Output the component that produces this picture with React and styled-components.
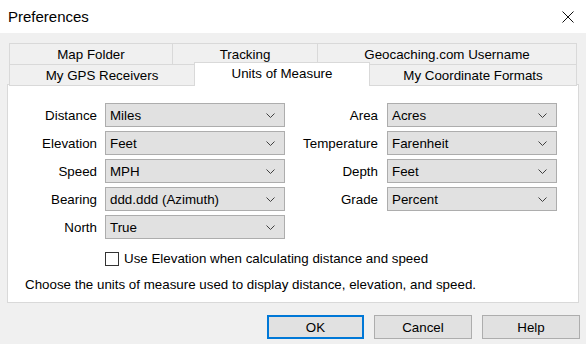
import React from 'react';
import styled, {createGlobalStyle} from 'styled-components';

const Global = createGlobalStyle`
    html, body {
        margin:0;
        padding:0;
        background:#f0f0f0;
    }
    body {
        width:586px;
        height:344px;
        overflow:hidden;
        font-family:"Liberation Sans", Arial, sans-serif;
        font-size:13.35px;
        color:#000;
    }
`;
const Window = styled.div`
    width:586px;
    height:344px;
    background:#f0f0f0;
    display:flex;
    flex-direction:column;
`;
const TitleBar = styled.div`
    height:33px;
    background:#fff;
    display:flex;
    align-items:center;
    justify-content:space-between;
    padding:0 12px 0 8px;
    box-sizing:border-box;
`;
const Title = styled.div`
    font-size:15px;
`;
const Tabs = styled.div`
    margin:10px 0 0 9px;
    width:568px;
    display:flex;
    flex-direction:column;
`;
const TabRow = styled.div`
    display:flex;
    height:21px;
`;
const Tab = styled.div`
    width:${p => p.w}px;
    box-sizing:border-box;
    height:${p => p.active ? 24 : 22}px;
    margin-top:${p => p.active ? -2 : 0}px;
    margin-right:-1px;
    border:1px solid #d9d9d9;
    border-bottom:${p => p.active ? 'none' : '1px solid #d9d9d9'};
    background:${p => p.active ? '#fff' : '#f0f0f0'};
    z-index:${p => p.active ? 2 : 1};
    display:flex;
    justify-content:center;
    align-items:${p => p.active ? 'flex-start' : 'center'};
    padding-top:${p => p.active ? 3 : 0}px;
    &:last-child { margin-right:0; }
`;
const Panel = styled.div`
    margin:-1px 0 0 7px;
    width:572px;
    height:219px;
    box-sizing:border-box;
    border:1px solid #d9d9d9;
    background:#fff;
    padding-top:18px;
    display:flex;
    flex-direction:column;
`;
const Form = styled.div`
    display:flex;
    gap:8px;
    align-items:flex-start;
`;
const Column = styled.div`
    display:grid;
    grid-template-columns:${p => p.cols};
    column-gap:${p => p.gap}px;
    row-gap:4px;
    grid-auto-rows:24px;
    align-items:center;
`;
const Label = styled.div`
    text-align:right;
`;
const Combo = styled.div`
    height:24px;
    box-sizing:border-box;
    border:1px solid #adadad;
    background:#e1e1e1;
    display:flex;
    align-items:center;
    justify-content:space-between;
    padding:0 9px 0 4px;
`;
const CheckRow = styled.div`
    display:flex;
    align-items:center;
    gap:5px;
    padding-left:97px;
    margin-top:12px;
`;
const Box = styled.div`
    width:14px;
    height:14px;
    box-sizing:border-box;
    border:1px solid #333;
    background:#fff;
`;
const Note = styled.div`
    padding-left:17px;
    margin-top:11px;
`;
const Buttons = styled.div`
    display:flex;
    justify-content:flex-end;
    gap:10px;
    padding:12px 6px 0 0;
`;
const Button = styled.div`
    width:${p => p.w || 98}px;
    height:24px;
    box-sizing:border-box;
    border:${p => p.primary ? '2px solid #0078d7' : '1px solid #adadad'};
    background:#e1e1e1;
    display:flex;
    align-items:center;
    justify-content:center;
`;

function Chevron(){
    return (
        <svg width="9" height="5" viewBox="0 0 9 5">
            <polyline points="0.5,0.5 4.5,4.5 8.5,0.5" fill="none" stroke="#404040" strokeWidth="1"/>
        </svg>
    );
}

const left = [
    ['Distance', 'Miles'],
    ['Elevation', 'Feet'],
    ['Speed', 'MPH'],
    ['Bearing', 'ddd.ddd (Azimuth)'],
    ['North', 'True'],
];
const right = [
    ['Area', 'Acres'],
    ['Temperature', 'Farenheit'],
    ['Depth', 'Feet'],
    ['Grade', 'Percent'],
];

function App(){
    return (
        <Window>
            <Global/>
            <TitleBar>
                <Title>Preferences</Title>
                <svg width="12" height="12" viewBox="0 0 12 12">
                    <path d="M0.5 0.5 L11.5 11.5 M11.5 0.5 L0.5 11.5" stroke="#111" strokeWidth="1"/>
                </svg>
            </TitleBar>
            <Tabs>
                <TabRow>
                    <Tab w={164}>Map Folder</Tab>
                    <Tab w={146}>Tracking</Tab>
                    <Tab w={260}>Geocaching.com Username</Tab>
                </TabRow>
                <TabRow>
                    <Tab w={186}>My GPS Receivers</Tab>
                    <Tab w={176} active>Units of Measure</Tab>
                    <Tab w={208}>My Coordinate Formats</Tab>
                </TabRow>
            </Tabs>
            <Panel>
                <Form>
                    <Column cols="89px 180px" gap={8}>
                        {left.map(([l, v]) => (
                            <React.Fragment key={l}>
                                <Label>{l}</Label>
                                <Combo>{v}<Chevron/></Combo>
                            </React.Fragment>
                        ))}
                    </Column>
                    <Column cols="85px 170px" gap={9}>
                        {right.map(([l, v]) => (
                            <React.Fragment key={l}>
                                <Label>{l}</Label>
                                <Combo>{v}<Chevron/></Combo>
                            </React.Fragment>
                        ))}
                    </Column>
                </Form>
                <CheckRow>
                    <Box/>
                    <span>Use Elevation when calculating distance and speed</span>
                </CheckRow>
                <Note>Choose the units of measure used to display distance, elevation, and speed.</Note>
            </Panel>
            <Buttons>
                <Button primary w={97}>OK</Button>
                <Button>Cancel</Button>
                <Button>Help</Button>
            </Buttons>
        </Window>
    );
}
export default App;
